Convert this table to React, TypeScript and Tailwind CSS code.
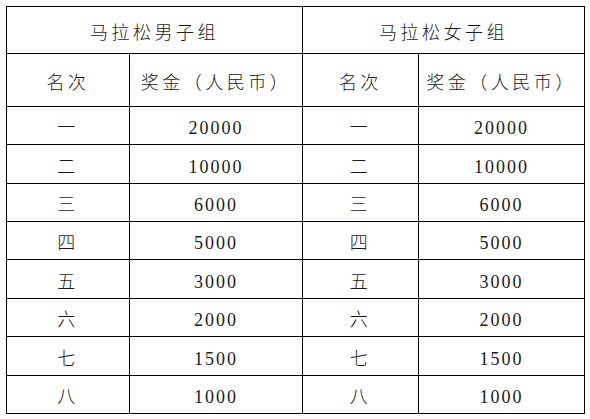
import type { FC } from "react";

const ranks = ["一", "二", "三", "四", "五", "六", "七", "八"];
const prizes = ["20000", "10000", "6000", "5000", "3000", "2000", "1500", "1000"];
// row heights measured from the reference grid lines
const rowHeights = ["h-[37px]", "h-[38px]", "h-[37px]", "h-[37px]", "h-[38px]", "h-[37px]", "h-[38px]", "h-[37px]"];

const cell = "flex items-center justify-center bg-white pt-[6px]";
const cjk = "tracking-[3.5px]";
const num = "tracking-[2px]";

const PrizeTable: FC = () => (
  <div className="grid w-[579px] grid-cols-[122px_172px_115px_165px] gap-px bg-black p-px text-[18px] font-light text-[#1a1a1a] font-['Liberation_Serif','Noto_Sans_CJK_SC',serif]">
    <div className={`${cell} col-span-2 h-[46px] ${cjk}`}>马拉松男子组</div>
    <div className={`${cell} col-span-2 h-[46px] ${cjk}`}>马拉松女子组</div>

    <div className={`${cell} h-[52px] ${cjk}`}>名次</div>
    <div className={`${cell} h-[52px] ${cjk}`}>奖金（人民币）</div>
    <div className={`${cell} h-[52px] ${cjk}`}>名次</div>
    <div className={`${cell} h-[52px] ${cjk}`}>奖金（人民币）</div>

    {ranks.map((rank, i) => (
      <div key={rank} className="contents">
        <div className={`${cell} ${rowHeights[i]} ${cjk}`}>{rank}</div>
        <div className={`${cell} ${rowHeights[i]} ${num}`}>{prizes[i]}</div>
        <div className={`${cell} ${rowHeights[i]} ${cjk}`}>{rank}</div>
        <div className={`${cell} ${rowHeights[i]} ${num}`}>{prizes[i]}</div>
      </div>
    ))}
  </div>
);

export default function App() {
  return (
    <div className="h-[419px] w-[590px] bg-white p-[6px]">
      <PrizeTable />
    </div>
  );
}
